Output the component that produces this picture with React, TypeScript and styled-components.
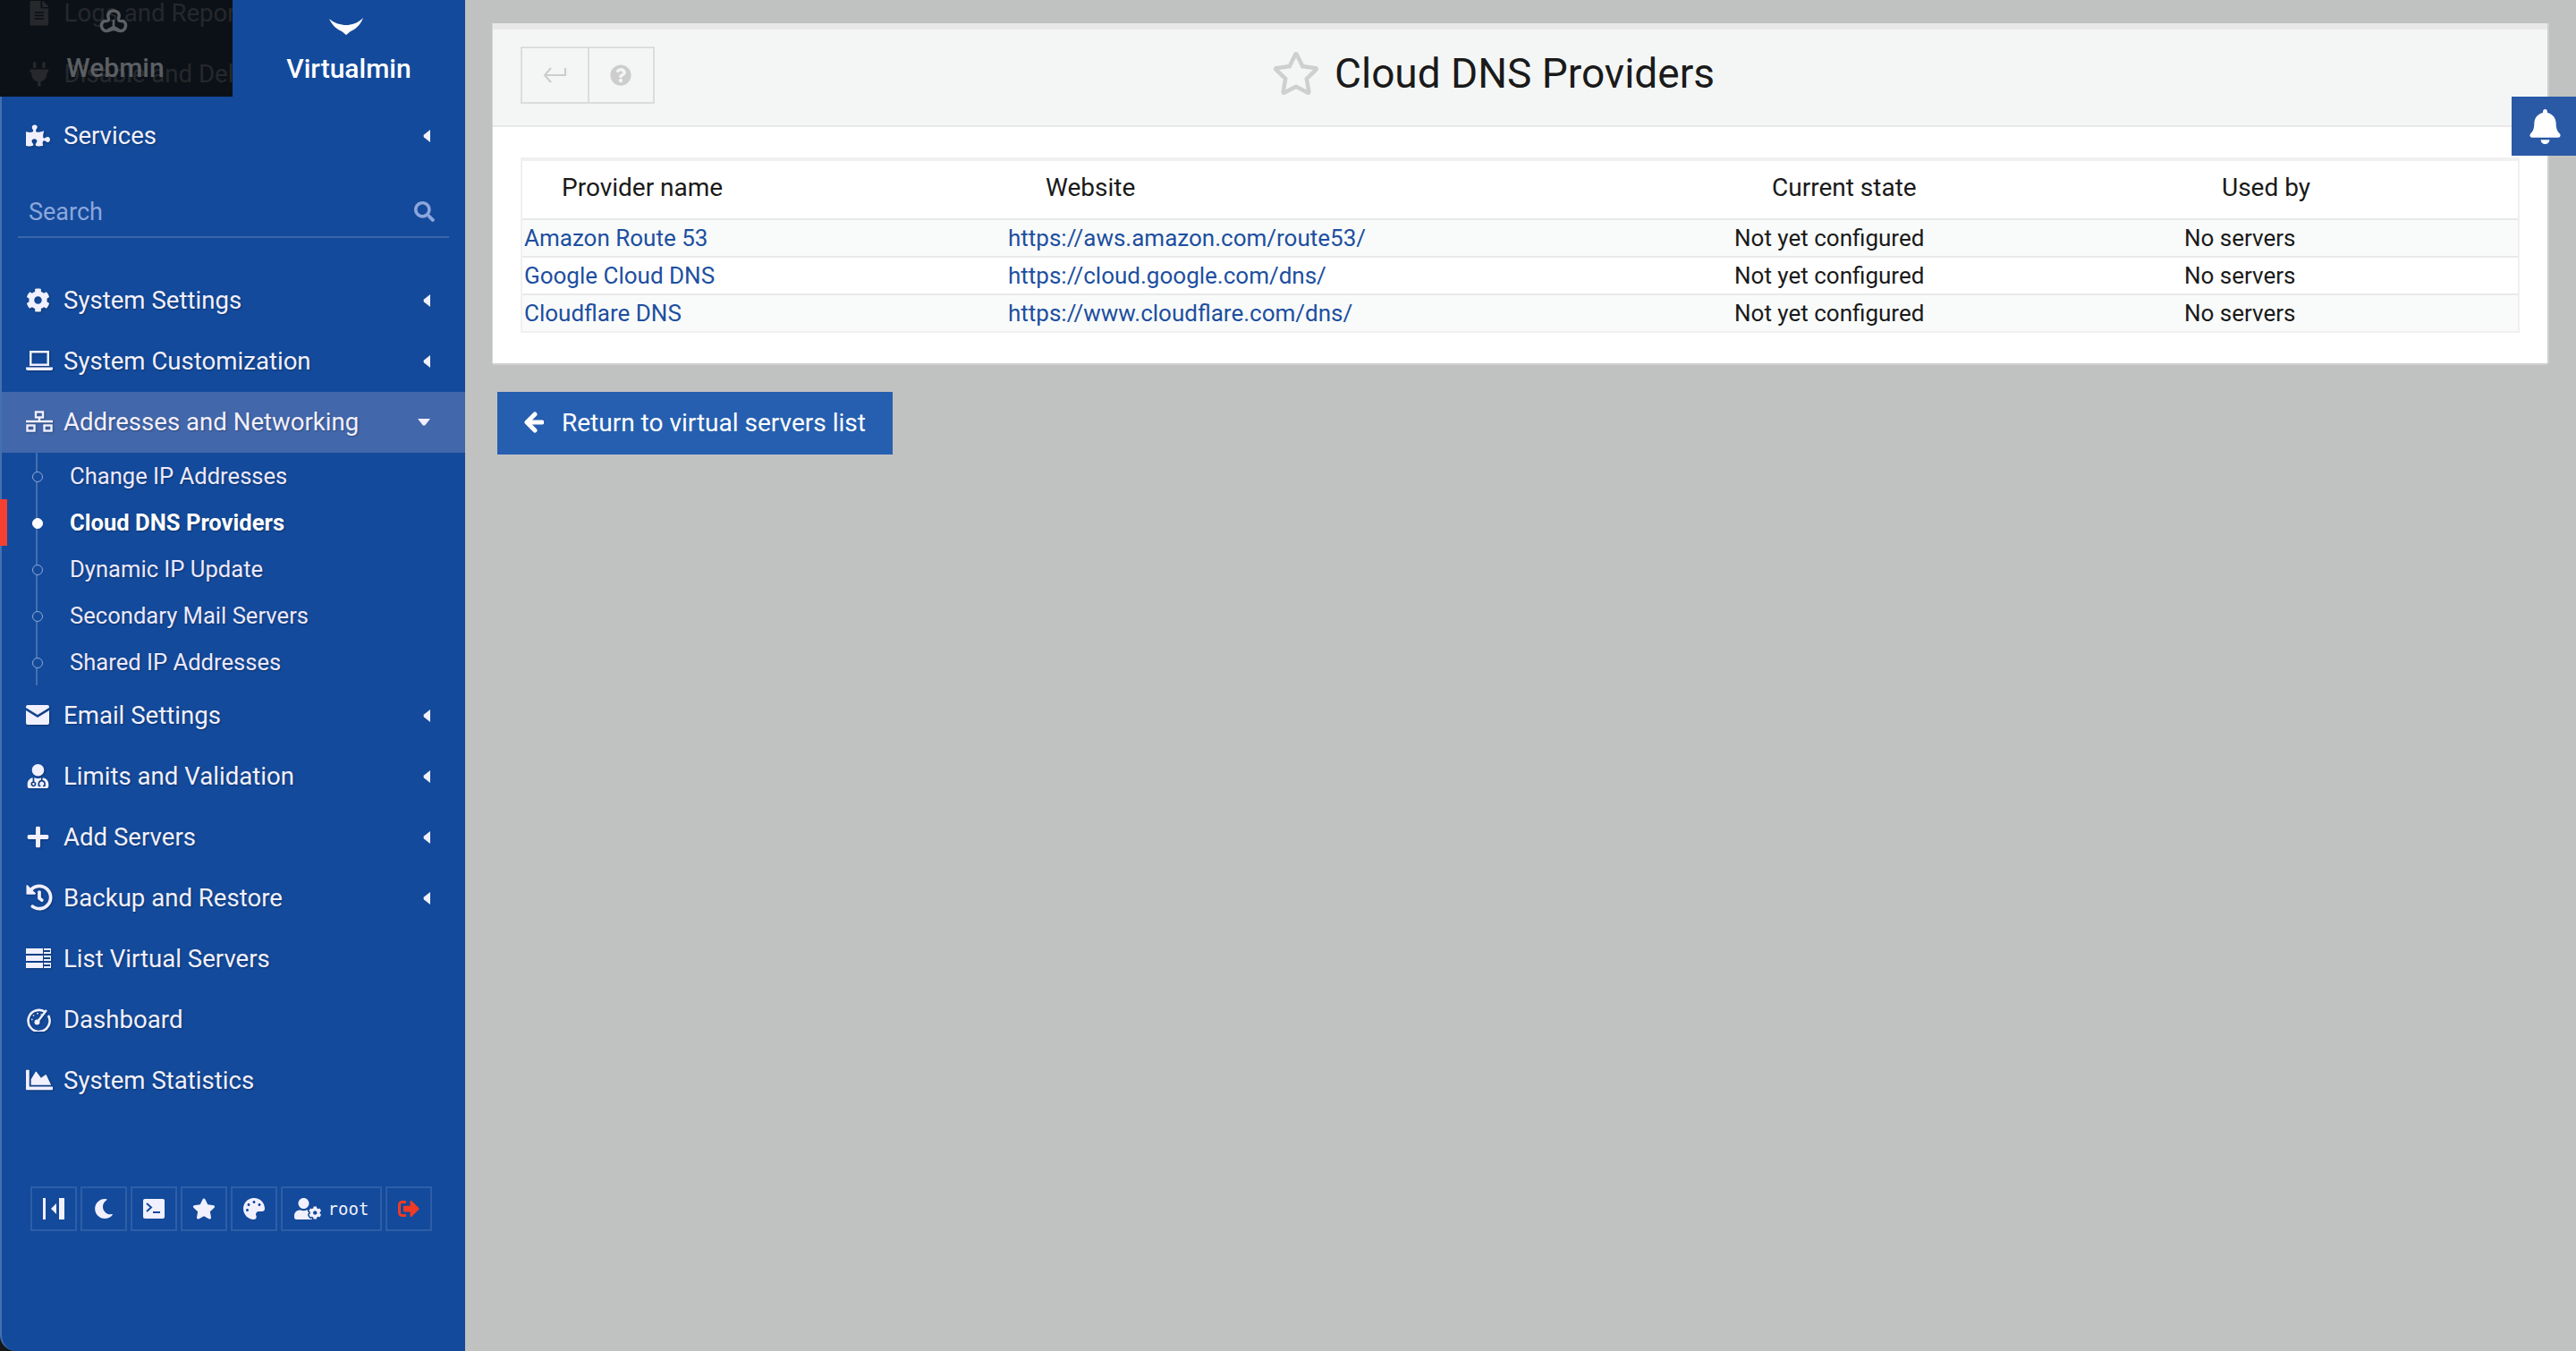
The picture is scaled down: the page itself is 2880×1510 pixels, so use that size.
import React from "react";
import styled, { createGlobalStyle } from "styled-components";
import {
  FaPuzzlePiece,
  FaCog,
  FaUserMd,
  FaPlus,
  FaHistory,
  FaChartArea,
  FaSearch,
  FaMoon,
  FaStar,
  FaRegStar,
  FaPalette,
  FaUserCog,
  FaBell,
  FaQuestionCircle,
  FaFileAlt,
  FaPlug,
  FaSignOutAlt,
} from "react-icons/fa";

const GlobalStyle = createGlobalStyle`
  html, body {
    margin: 0;
    padding: 0;
    background: #c0c2c1;
  }
  * {
    box-sizing: border-box;
  }
`;

const NetworkIcon = () => (
  <svg viewBox="0 0 30 24" width="30" height="24" fill="none" stroke="currentColor" strokeWidth="2.4">
    <rect x="11" y="1.5" width="8" height="6" />
    <rect x="1.5" y="16.5" width="8" height="6" />
    <rect x="20.5" y="16.5" width="8" height="6" />
    <path d="M0 12h30M15 7.5V12" />
  </svg>
);

const LaptopIcon = () => (
  <svg viewBox="0 0 30 22" width="30" height="22" fill="currentColor">
    <path d="M4 0h22v17H4zM6.500 2.500v12h17v-12z" fillRule="evenodd" />
    <path d="M0 18.500h30V20a2 2 0 0 1-2 2H2a2 2 0 0 1-2-2z" />
  </svg>
);

const MailIcon = () => (
  <svg viewBox="0 0 26 22" width="26" height="22" fill="currentColor">
    <path d="M2 0h22a2 2 0 0 1 2 2v1L13 11 0 3V2a2 2 0 0 1 2-2z" />
    <path d="M0 6l13 8 13-8v14a2 2 0 0 1-2 2H2a2 2 0 0 1-2-2z" />
  </svg>
);

const ServerListIcon = () => (
  <svg viewBox="0 0 28 22" width="28" height="22" fill="currentColor">
    <path d="M0 0h19v6H0zM20 0h8v6h-8V4h7V2h-7z" />
    <path d="M0 8h19v6H0zM20 8h8v6h-8v-2h7v-2h-7z" />
    <path d="M0 16h19v6H0zM20 16h8v6h-8v-2h7v-2h-7z" />
  </svg>
);

const GaugeIcon = () => (
  <svg viewBox="0 0 28 28" width="28" height="28" fill="none" stroke="currentColor">
    <path d="M22 6.500A12 12 0 1 0 25 10" strokeWidth="2.6" />
    <path d="M13 17l10-13" strokeWidth="2.4" />
    <circle cx="12.500" cy="17.500" r="3" fill="currentColor" stroke="none" />
    <path d="M6 14.500h1.500M8 9.500l1 1M13 7v1.500M17.500 8.500l-.7 1" strokeWidth="1.600" />
  </svg>
);

const CollapseIcon = () => (
  <svg viewBox="0 0 24 24" width="24" height="24" fill="currentColor">
    <rect x="0" y="0" width="3" height="24" />
    <rect x="18" y="0" width="6" height="24" />
    <path d="M15 6v12l-6-6z" />
  </svg>
);

const TerminalIcon = () => (
  <svg viewBox="0 0 24 22" width="24" height="22">
    <rect width="24" height="22" rx="2" fill="currentColor" />
    <path d="M4 5l5 4.500-5 4.500" fill="none" stroke="#134a9b" strokeWidth="2" />
    <path d="M11 15h8" stroke="#134a9b" strokeWidth="2" />
  </svg>
);

const ReturnIcon = () => (
  <svg viewBox="0 0 28 22" width="28" height="22" fill="none" stroke="currentColor" strokeWidth="2.200">
    <path d="M26 3v8H3M10 3l-7 8 7 8" />
  </svg>
);

const BackArrowIcon = () => (
  <svg viewBox="0 0 22 24" width="22" height="24" fill="none" stroke="currentColor" strokeWidth="5" strokeLinecap="round" strokeLinejoin="round">
    <path d="M12 3l-9 9 9 9M4 12h16" />
  </svg>
);

const CaretLeftIcon = () => (
  <svg viewBox="0 0 8 14" width="8" height="14" fill="currentColor">
    <path d="M8 0v14L1 8.500Q0 7 1 5.500z" />
  </svg>
);

const CaretDownIcon = () => (
  <svg viewBox="0 0 14 8" width="14" height="8" fill="currentColor">
    <path d="M0 0h14L8.500 7Q7 8 5.500 7z" />
  </svg>
);

const WebminLogo = () => (
  <svg viewBox="0 0 34 34" width="34" height="34" fill="none" stroke="currentColor" strokeWidth="3.400">
    <path d="M17 2c4 0 7 3 6 7-.4 1.800-1 3 0 4 2 1.500 4-.5 6 1.500 3 3 1.500 9-3 10-4 1-6-2-9-2s-5 3-9 2c-4.500-1-6-7-3-10 2-2 4 0 6-1.500 1-1 .4-2.200 0-4-1-4 2-7 6-7z" />
    <path d="M17 12v8M17 20l-7 4M17 20l7 4" strokeWidth="2.600" />
  </svg>
);

const VirtualminLogo = () => (
  <svg viewBox="0 0 38 19" width="38" height="19" fill="currentColor">
    <path d="M0 1c6 5 13 7 19 7s13-2 19-8c-3 8-9 13-14 15-2 1-3 3-5 4-2-1-3-3-5-4C9 13 3 8 0 1z" />
  </svg>
);

const Page = styled.div`
  display: flex;
  width: 2880px;
  height: 1510px;
  overflow: hidden;
  background: #c0c2c1;
  font-family: Roboto, "Liberation Sans", sans-serif;
`;

const SidebarFrame = styled.div`
  flex: 0 0 520px;
  background: #15171b;
`;

const Sidebar = styled.aside`
  height: 100%;
  display: flex;
  flex-direction: column;
  background: #134a9b;
  border-left: 2px solid #4570b0;
  border-bottom-left-radius: 18px;
  color: #f1f0ff;
`;

const Tabs = styled.div`
  display: flex;
  height: 118px;
  padding-bottom: 10px;
  margin-left: -2px;
`;

const Tab = styled.div<{ $active?: boolean }>`
  position: relative;
  flex: 0 0 260px;
  overflow: hidden;
  display: flex;
  flex-direction: column;
  align-items: center;
  background: ${(p) => (p.$active ? "transparent" : "#0c1118")};
  color: ${(p) => (p.$active ? "#ffffff" : "#5c5f63")};
`;

const TabLogo = styled.div<{ $top: number; $shift: number }>`
  position: relative;
  height: ${(p) => p.$top}px;
  display: flex;
  align-items: flex-end;
  margin-right: ${(p) => p.$shift}px;
`;

const TabLabel = styled.div<{ $gap: number; $shift: number }>`
  position: relative;
  margin-top: ${(p) => p.$gap}px;
  margin-right: ${(p) => p.$shift}px;
  font-size: 30px;
  line-height: 34px;
  font-weight: 500;
`;

const GhostRow = styled.div<{ $top: number }>`
  position: absolute;
  left: 30px;
  top: ${(p) => p.$top}px;
  display: flex;
  align-items: center;
  gap: 14px;
  white-space: nowrap;
  font-size: 27.600px;
  line-height: 34px;
  color: #26282b;
`;

const NavRow = styled.div<{ $open?: boolean }>`
  display: flex;
  align-items: center;
  height: 68px;
  padding: 0 39px 2px 27px;
  font-size: 27.600px;
  text-shadow: 1px 1px 2px rgba(0, 0, 0, 0.3);
  background: ${(p) => (p.$open ? "#4267ab" : "transparent")};
`;

const NavIcon = styled.span`
  flex: 0 0 42px;
  display: flex;
  align-items: center;
  font-size: 27px;
  filter: drop-shadow(1px 1px 1px rgba(0, 0, 0, 0.25));
`;

const NavLabel = styled.span`
  flex: 1;
  white-space: nowrap;
`;

const Caret = styled.span`
  display: flex;
  padding-top: 2px;
  color: #f1f0ff;
`;

const SearchBox = styled.div`
  display: flex;
  align-items: center;
  justify-content: space-between;
  height: 80px;
  margin: 0 18px 36px 18px;
  padding: 23px 16px 0 12px;
  border-bottom: 2px solid #3a66ad;
  font-size: 27px;
  color: #8ca6dc;
`;

const SubList = styled.div`
  position: relative;
  height: 260px;
  &::before {
    content: "";
    position: absolute;
    left: 38px;
    top: 0;
    bottom: 0;
    width: 2px;
    background: #4570b0;
  }
`;

const SubRow = styled.div<{ $current?: boolean }>`
  position: relative;
  display: flex;
  align-items: center;
  height: 52px;
  padding-left: 76px;
  font-size: 25.600px;
  font-weight: ${(p) => (p.$current ? 700 : 400)};
  color: ${(p) => (p.$current ? "#ffffff" : "#ece9ff")};
  text-shadow: 1px 1px 2px rgba(0, 0, 0, 0.3);
  &::before {
    content: "";
    position: absolute;
    left: 34px;
    top: 21px;
    width: 10px;
    height: 10px;
    border-radius: 50%;
    border: 1.500px solid ${(p) => (p.$current ? "#ffffff" : "#8ea7d8")};
    background: ${(p) => (p.$current ? "#ffffff" : "#134a9b")};
  }
  &::after {
    content: "";
    display: ${(p) => (p.$current ? "block" : "none")};
    position: absolute;
    left: -2px;
    top: 0;
    width: 8px;
    height: 52px;
    background: #f44030;
  }
`;

const Footer = styled.div`
  display: flex;
  gap: 4px;
  margin: 84px 0 0 32px;
`;

const FootButton = styled.div<{ $wide?: boolean; $danger?: boolean }>`
  display: flex;
  align-items: center;
  justify-content: center;
  gap: 8px;
  width: ${(p) => (p.$wide ? "113px" : "52px")};
  height: 50px;
  border: 2px solid #2e5ea8;
  font-family: "DejaVu Sans Mono", monospace;
  font-size: 19px;
  color: ${(p) => (p.$danger ? "#f03a24" : "#f1f0ff")};
  svg {
    font-size: 24px;
  }
`;

const Main = styled.main`
  position: relative;
  flex: 1;
  padding: 26px 32px 0 31px;
`;

const Panel = styled.section`
  background: #ffffff;
  border-top: 7px solid #e8e8e8;
  box-shadow: 0 2px 0 #cfcfcf, 2px 0 0 #cfcfcf, -1px 0 0 #d6d6d6;
  height: 380px;
`;

const PanelHead = styled.header`
  position: relative;
  display: flex;
  align-items: center;
  justify-content: center;
  gap: 16px;
  height: 109px;
  padding: 0 60px 10px 0;
  background: #f4f6f5;
  border-bottom: 2px solid #e8e8e8;
  color: #1a1a1a;
  font-size: 46px;
`;

const HeadTools = styled.div`
  position: absolute;
  left: 31px;
  top: 19px;
  display: flex;
  height: 64px;
  border: 2px solid #dcdcdc;
`;

const HeadTool = styled.div`
  display: flex;
  align-items: center;
  justify-content: center;
  width: 73px;
  padding-right: 2px;
  color: #cdcdcd;
  font-size: 24px;
  & + & {
    border-left: 2px solid #dcdcdc;
  }
`;

const TitleStar = styled.span`
  display: flex;
  color: #cfcfcf;
  font-size: 54px;
`;

const ProvidersTable = styled.div`
  margin: 34px 31px 0 31px;
  border: 2px solid #f0f0f0;
  border-top-width: 4px;
  color: #1a1a1a;
`;

const TableRow = styled.div<{ $head?: boolean; $odd?: boolean }>`
  display: grid;
  grid-template-columns: 541px 812px 503px 1fr;
  align-items: center;
  height: ${(p) => (p.$head ? "66px" : "42px")};
  padding-bottom: ${(p) => (p.$head ? "5px" : "0")};
  background: ${(p) => (p.$odd ? "#f9fbfa" : "#ffffff")};
  border-bottom: 2px solid #e8e9e9;
  font-size: ${(p) => (p.$head ? "28px" : "26px")};
  &:last-child {
    height: 40px;
    border-bottom: none;
  }
`;

const HeadCell = styled.div`
  padding-left: 44px;
`;

const Cell = styled.div`
  padding-left: 2px;
`;

const ProviderLink = styled.a`
  color: #1d4fa0;
  text-decoration: none;
`;

const ReturnButton = styled.div`
  display: inline-flex;
  align-items: center;
  gap: 20px;
  height: 70px;
  margin: 32px 0 0 5px;
  padding: 0 30px 2px 30px;
  background: #265fb0;
  color: #ffffff;
  font-size: 28px;
`;

const BellTab = styled.div`
  position: absolute;
  top: 108px;
  right: 0;
  width: 72px;
  height: 66px;
  padding-left: 2px;
  display: flex;
  align-items: center;
  justify-content: center;
  background: #2a59a5;
  color: #ffffff;
  font-size: 39px;
`;

const closedBefore = [
  { label: "System Settings", icon: <FaCog /> },
  { label: "System Customization", icon: <LaptopIcon /> },
];

const subItems = [
  "Change IP Addresses",
  "Cloud DNS Providers",
  "Dynamic IP Update",
  "Secondary Mail Servers",
  "Shared IP Addresses",
];

const navAfter = [
  { label: "Email Settings", icon: <MailIcon />, caret: true },
  { label: "Limits and Validation", icon: <FaUserMd />, caret: true },
  { label: "Add Servers", icon: <FaPlus />, caret: true },
  { label: "Backup and Restore", icon: <FaHistory size={30} />, caret: true },
  { label: "List Virtual Servers", icon: <ServerListIcon />, caret: false },
  { label: "Dashboard", icon: <GaugeIcon />, caret: false },
  { label: "System Statistics", icon: <FaChartArea size={30} />, caret: false },
];

const providers = [
  { name: "Amazon Route 53", url: "https://aws.amazon.com/route53/" },
  { name: "Google Cloud DNS", url: "https://cloud.google.com/dns/" },
  { name: "Cloudflare DNS", url: "https://www.cloudflare.com/dns/" },
];

const App = () => {
  return (
    <Page>
      <GlobalStyle />
      <SidebarFrame>
        <Sidebar>
          <Tabs>
            <Tab>
              <GhostRow $top={-2}>
                <FaFileAlt /> Logs and Reports
              </GhostRow>
              <GhostRow $top={66}>
                <FaPlug /> Disable and Delete
              </GhostRow>
              <TabLogo $top={44} $shift={6}>
                <WebminLogo />
              </TabLogo>
              <TabLabel $gap={15} $shift={2}>
                Webmin
              </TabLabel>
            </Tab>
            <Tab $active>
              <TabLogo $top={39} $shift={6}>
                <VirtualminLogo />
              </TabLogo>
              <TabLabel $gap={21} $shift={0}>
                Virtualmin
              </TabLabel>
            </Tab>
          </Tabs>

          <NavRow>
            <NavIcon>
              <FaPuzzlePiece />
            </NavIcon>
            <NavLabel>Services</NavLabel>
            <Caret>
              <CaretLeftIcon />
            </Caret>
          </NavRow>

          <SearchBox>
            <span>Search</span>
            <FaSearch size={23} />
          </SearchBox>

          {closedBefore.map((item) => (
            <NavRow key={item.label}>
              <NavIcon>{item.icon}</NavIcon>
              <NavLabel>{item.label}</NavLabel>
              <Caret>
                <CaretLeftIcon />
              </Caret>
            </NavRow>
          ))}

          <NavRow $open>
            <NavIcon>
              <NetworkIcon />
            </NavIcon>
            <NavLabel>Addresses and Networking</NavLabel>
            <Caret>
              <CaretDownIcon />
            </Caret>
          </NavRow>

          <SubList>
            {subItems.map((label) => (
              <SubRow key={label} $current={label === "Cloud DNS Providers"}>
                {label}
              </SubRow>
            ))}
          </SubList>

          {navAfter.map((item) => (
            <NavRow key={item.label}>
              <NavIcon>{item.icon}</NavIcon>
              <NavLabel>{item.label}</NavLabel>
              {item.caret && (
                <Caret>
                  <CaretLeftIcon />
                </Caret>
              )}
            </NavRow>
          ))}

          <Footer>
            <FootButton>
              <CollapseIcon />
            </FootButton>
            <FootButton>
              <FaMoon size={22} />
            </FootButton>
            <FootButton>
              <TerminalIcon />
            </FootButton>
            <FootButton>
              <FaStar size={26} />
            </FootButton>
            <FootButton>
              <FaPalette />
            </FootButton>
            <FootButton $wide>
              <FaUserCog size={30} />
              root
            </FootButton>
            <FootButton $danger>
              <FaSignOutAlt />
            </FootButton>
          </Footer>
        </Sidebar>
      </SidebarFrame>

      <Main>
        <Panel>
          <PanelHead>
            <HeadTools>
              <HeadTool>
                <ReturnIcon />
              </HeadTool>
              <HeadTool>
                <FaQuestionCircle />
              </HeadTool>
            </HeadTools>
            <TitleStar>
              <FaRegStar />
            </TitleStar>
            Cloud DNS Providers
          </PanelHead>

          <ProvidersTable>
            <TableRow $head>
              <HeadCell>Provider name</HeadCell>
              <HeadCell>Website</HeadCell>
              <HeadCell>Current state</HeadCell>
              <HeadCell>Used by</HeadCell>
            </TableRow>
            {providers.map((row, i) => (
              <TableRow key={row.name} $odd={i % 2 === 0}>
                <Cell>
                  <ProviderLink>{row.name}</ProviderLink>
                </Cell>
                <Cell>
                  <ProviderLink>{row.url}</ProviderLink>
                </Cell>
                <Cell>Not yet configured</Cell>
                <Cell>No servers</Cell>
              </TableRow>
            ))}
          </ProvidersTable>
        </Panel>

        <ReturnButton>
          <BackArrowIcon />
          Return to virtual servers list
        </ReturnButton>

        <BellTab>
          <FaBell />
        </BellTab>
      </Main>
    </Page>
  );
};

export default App;
